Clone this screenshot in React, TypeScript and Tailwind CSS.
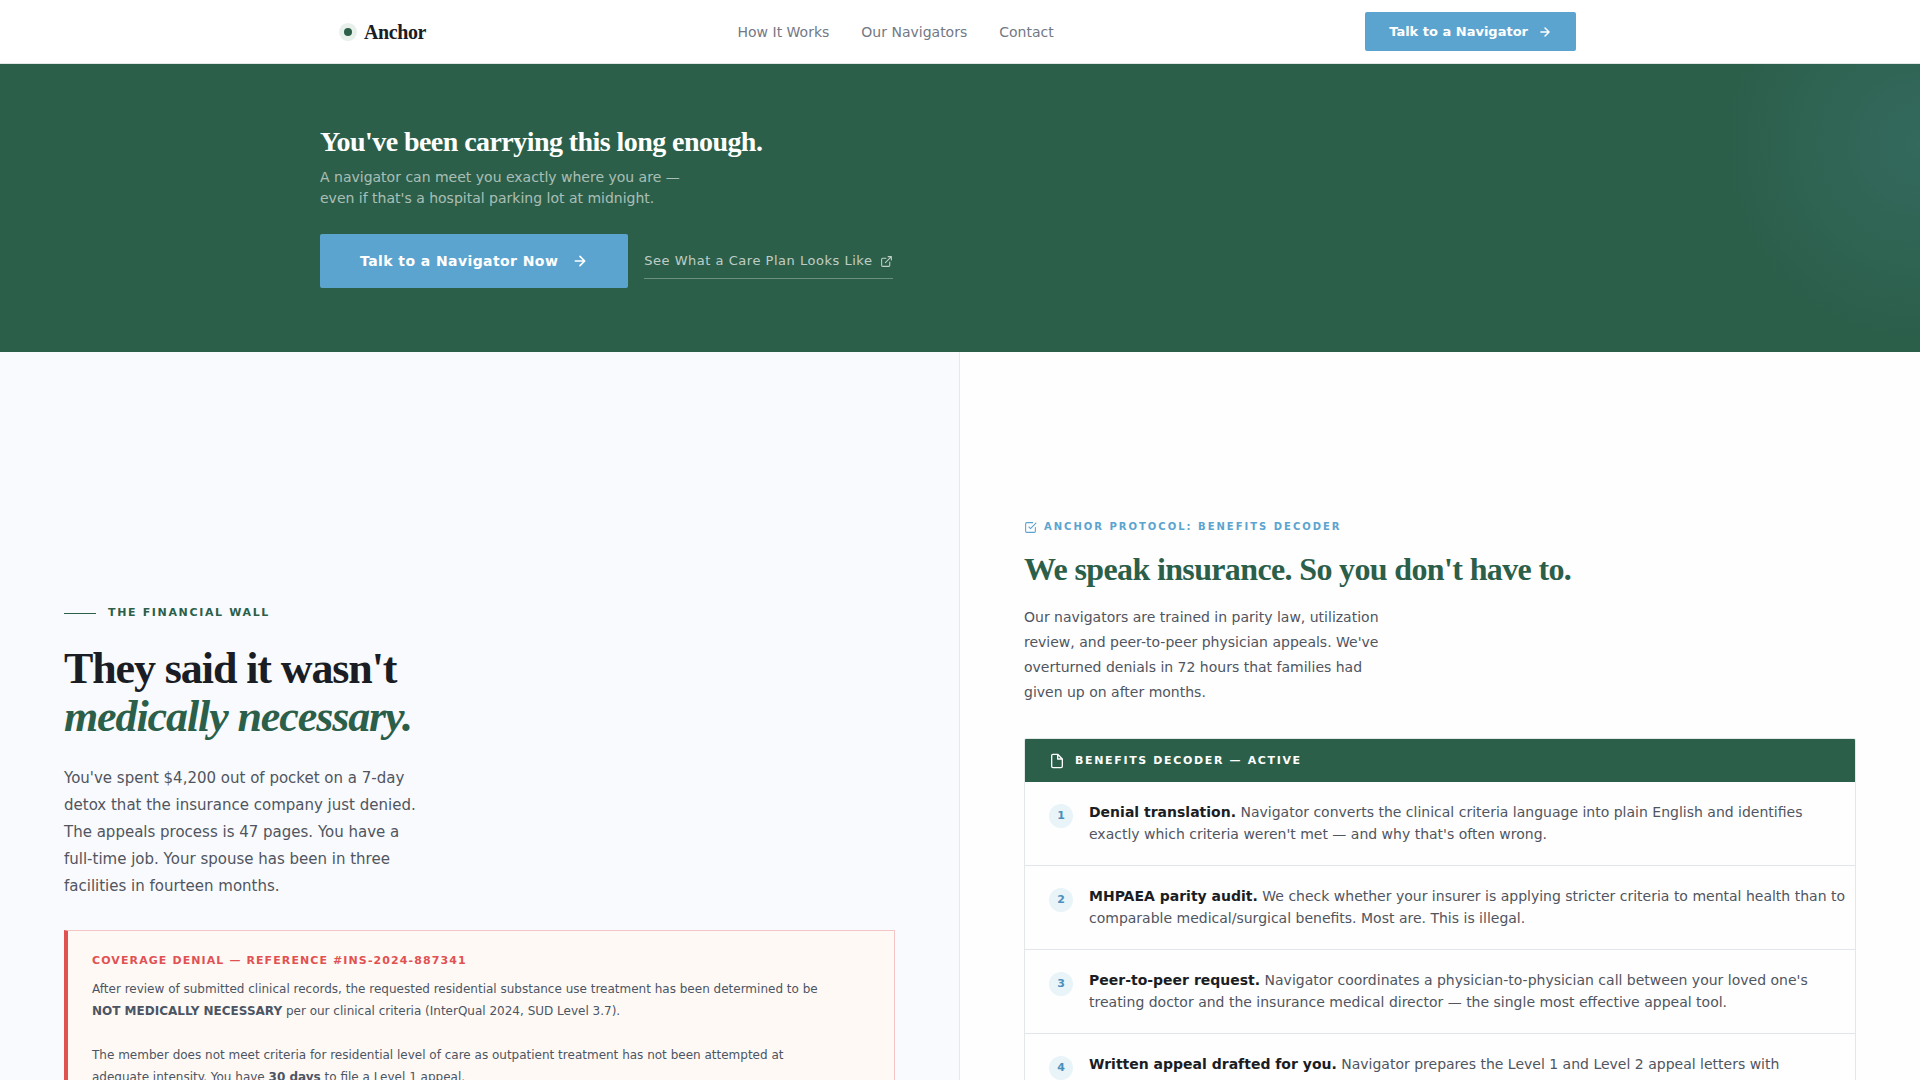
import React from "react";

const steps = [
  {
    title: "Denial translation.",
    body: "Navigator converts the clinical criteria language into plain English and identifies exactly which criteria weren't met — and why that's often wrong.",
  },
  {
    title: "MHPAEA parity audit.",
    body: "We check whether your insurer is applying stricter criteria to mental health than to comparable medical/surgical benefits. Most are. This is illegal.",
  },
  {
    title: "Peer-to-peer request.",
    body: "Navigator coordinates a physician-to-physician call between your loved one's treating doctor and the insurance medical director — the single most effective appeal tool.",
  },
  {
    title: "Written appeal drafted for you.",
    body: "Navigator prepares the Level 1 and Level 2 appeal letters with",
  },
];

type IconProps = { className: string; strokeWidth?: number; children: React.ReactNode };

function Icon({ className, strokeWidth = 2, children }: IconProps) {
  return (
    <svg
      viewBox="0 0 24 24"
      fill="none"
      stroke="currentColor"
      strokeWidth={strokeWidth}
      strokeLinecap="round"
      strokeLinejoin="round"
      aria-hidden="true"
      className={className}
    >
      {children}
    </svg>
  );
}

function Arrow({ className }: { className: string }) {
  return (
    <Icon className={className} strokeWidth={2.5}>
      <path d="M5 12h14M12 5l7 7-7 7" />
    </Icon>
  );
}

function Header() {
  return (
    <header className="border-b border-[#e2e8e5] bg-white">
      <div className="mx-auto flex h-[63px] max-w-7xl items-center justify-between px-6">
        <a href="#" className="flex items-center gap-3">
          <span className="size-2 rounded-full bg-[#2c5f4a] shadow-[0_0_0_5px_#e8f0ec]" />
          <span className="font-['Liberation_Serif',serif] text-xl font-bold tracking-[-0.02em] text-[#1a1d23]">
            Anchor
          </span>
        </a>
        <nav className="flex gap-8 text-sm text-[#737884]">
          <a href="#how">How It Works</a>
          <a href="#navigators">Our Navigators</a>
          <a href="#contact">Contact</a>
        </nav>
        <button className="flex h-[39px] items-center gap-2.5 rounded-xs bg-[#5ba4cf] px-6 text-[13px] font-bold text-white">
          Talk to a Navigator
          <Arrow className="size-3.5" />
        </button>
      </div>
    </header>
  );
}

function Hero() {
  return (
    <section className="relative overflow-hidden bg-[#2c5f4a] py-16">
      <div className="pointer-events-none absolute -top-30 -right-50 size-100 bg-[radial-gradient(circle,rgba(91,164,207,0.15)_0%,transparent_70%)]" />
      <div className="relative mx-auto max-w-7xl">
        <h2 className="font-['Liberation_Serif',serif] text-[28px] leading-[28px] font-bold tracking-[-0.02em] text-white">
          You've been carrying this long enough.
        </h2>
        <p className="mt-[11px] text-sm leading-[21px] text-white/60">
          A navigator can meet you exactly where you are —
          <br />
          even if that's a hospital parking lot at midnight.
        </p>
        <div className="mt-[25px] flex items-center gap-4">
          <button className="flex h-[54px] items-center gap-3.5 rounded-xs bg-[#5ba4cf] px-10 text-sm font-bold tracking-[0.03em] text-white">
            Talk to a Navigator Now
            <Arrow className="size-4" />
          </button>
          <a
            href="#plan"
            className="flex items-center gap-2 border-b border-white/30 pt-2 pb-[7px] text-[13px] leading-5 tracking-[0.04em] text-white/70"
          >
            See What a Care Plan Looks Like
            <Icon className="size-[13px]">
              <path d="M18 13v6a2 2 0 0 1-2 2H5a2 2 0 0 1-2-2V8a2 2 0 0 1 2-2h6M15 3h6v6M10 14 21 3" />
            </Icon>
          </a>
        </div>
      </div>
    </section>
  );
}

function DenialPanel() {
  return (
    <section className="border-r border-[#e2e8f0] bg-[#f8fafd] px-16 pt-[253px] pb-16">
      <p className="flex items-center gap-3 text-[11px] leading-4 font-bold tracking-[0.15em] text-[#2c5f4a] uppercase">
        <span className="h-px w-8 bg-[#2c5f4a]" />
        The Financial Wall
      </p>
      <h1 className="mt-6 font-['Liberation_Serif',serif] text-[44px] leading-[48px] font-bold tracking-tight text-[#1a1d23]">
        They said it wasn't
        <br />
        <em className="text-[#2c5f4a]">medically necessary.</em>
      </h1>
      <p className="mt-6 max-w-[360px] text-[15px] leading-[27px] text-[#50555f]">
        You've spent $4,200 out of pocket on a 7-day detox that the insurance company just denied. The appeals process
        is 47 pages. You have a full-time job. Your spouse has been in three facilities in fourteen months.
      </p>
      <article className="mt-[30px] border border-l-4 border-[#f5c6c6] border-l-[#e05252] bg-[#fff9f6] pt-[22px] pr-14 pb-5 pl-6 text-[12px] leading-[22px] text-[#4b5563]">
        <h3 className="mb-[9px] text-[11px] leading-4 font-bold tracking-[0.1em] text-[#e05252] uppercase">
          Coverage Denial — Reference #INS-2024-887341
        </h3>
        <p>
          After review of submitted clinical records, the requested residential substance use treatment has been
          determined to be <strong>NOT MEDICALLY NECESSARY</strong> per our clinical criteria (InterQual 2024, SUD Level
          3.7).
        </p>
        <p className="mt-[22px]">
          The member does not meet criteria for residential level of care as outpatient treatment has not been attempted
          at adequate intensity. You have <strong>30 days</strong> to file a Level 1 appeal.
        </p>
      </article>
    </section>
  );
}

function DecoderPanel() {
  return (
    <section className="bg-[#fefefe] px-16 pt-[167px] pb-16">
      <p className="flex items-center gap-[7px] text-[10px] leading-4 font-bold tracking-[0.2em] text-[#5ba4cf] uppercase">
        <Icon className="size-[13px]">
          <path d="m9 11 3 3L22 4M21 12v7a2 2 0 0 1-2 2H5a2 2 0 0 1-2-2V5a2 2 0 0 1 2-2h11" />
        </Icon>
        Anchor Protocol: Benefits Decoder
      </p>
      <h2 className="mt-[15px] font-['Liberation_Serif',serif] text-[32px] leading-[38px] font-bold tracking-[-0.02em] text-[#2c5f4a]">
        We speak insurance. So you don't have to.
      </h2>
      <p className="mt-[17px] max-w-[380px] text-sm leading-[25px] text-[#50555f]">
        Our navigators are trained in parity law, utilization review, and peer-to-peer physician appeals. We've
        overturned denials in 72 hours that families had given up on after months.
      </p>
      <div className="mt-[33px] overflow-hidden rounded-xs border border-[#e2e8e8]">
        <h3 className="flex h-[43px] items-center gap-2.5 bg-[#2c5f4a] px-6 text-[11px] leading-4 font-bold tracking-[0.15em] text-white uppercase">
          <Icon className="size-4">
            <path d="M13 2H6a2 2 0 0 0-2 2v16a2 2 0 0 0 2 2h12a2 2 0 0 0 2-2V9zM13 2v7h7" />
          </Icon>
          Benefits Decoder — Active
        </h3>
        <ol className="divide-y divide-[#e2e5e9]">
          {steps.map((step, i) => (
            <li key={step.title} className="flex gap-4 pt-[19px] pr-2 pb-5 pl-6">
              <span className="mt-[3px] flex size-6 shrink-0 items-center justify-center rounded-full bg-[#e8f4f8] text-[11px] font-bold text-[#4a8fbd]">
                {i + 1}
              </span>
              <p className="text-sm leading-[22px] text-[#50555f]">
                <strong className="text-[#1a1d23]">{step.title}</strong> {step.body}
              </p>
            </li>
          ))}
        </ol>
      </div>
    </section>
  );
}

export default function App() {
  return (
    <div className="min-h-screen bg-white font-['DejaVu_Sans',sans-serif]">
      <Header />
      <main>
        <Hero />
        <div className="grid grid-cols-2">
          <DenialPanel />
          <DecoderPanel />
        </div>
      </main>
    </div>
  );
}
